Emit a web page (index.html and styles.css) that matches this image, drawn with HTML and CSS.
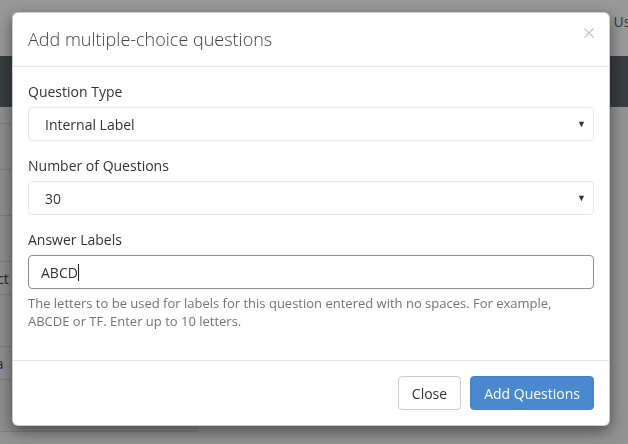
FILE: index.html
```html
<!DOCTYPE html>
<html lang="en">
<head>
  <meta charset="UTF-8">
  <meta name="viewport" content="width=device-width, initial-scale=1.0">
  <title>Add multiple-choice questions</title>
  <link rel="stylesheet" href="styles.css">
</head>
<body>
<div class="page">
  <!-- Page behind the dialog -->
  <header class="topbar">
    <a class="user-link" href="#">User</a>
  </header>
  <div class="toolbar"></div>
  <div class="content">
    <ul class="sidebar">
      <li class="row row-head"></li>
      <li class="row"></li>
      <li class="row"></li>
      <li class="row"></li>
      <li class="row row-sm">Select</li>
      <li class="row row-lg"></li>
      <li class="row row-sm">Extra</li>
      <li class="row row-lg"></li>
    </ul>
  </div>
</div>

<div class="backdrop"></div>

<div class="modal">
  <div class="modal-header">
    <h4 class="modal-title">Add multiple-choice questions</h4>
    <button class="close" type="button" aria-label="Close">
      <svg width="10" height="10" viewBox="0 0 10 10">
        <path d="M0.5 0.5 L9.5 9.5 M9.5 0.5 L0.5 9.5" stroke="#c4c4c4" stroke-width="1.1" fill="none"/>
      </svg>
    </button>
  </div>

  <div class="modal-body">
    <div class="field">
      <label for="qtype">Question Type</label>
      <div class="select-wrap">
        <select id="qtype">
          <option>Internal Label</option>
        </select>
      </div>
    </div>

    <div class="field">
      <label for="qcount">Number of Questions</label>
      <div class="select-wrap">
        <select id="qcount">
          <option>30</option>
        </select>
      </div>
    </div>

    <div class="field">
      <label for="labels">Answer Labels</label>
      <div class="input-wrap">
        <input type="text" id="labels" value="ABCD" autofocus>
        <span class="caret"></span>
      </div>
      <p class="help">The letters to be used for labels for this question entered with no spaces. For example, ABCDE or TF. Enter up to 10 letters.</p>
    </div>
  </div>

  <div class="modal-footer">
    <button class="btn btn-default" type="button">Close</button>
    <button class="btn btn-primary" type="button">Add Questions</button>
  </div>
</div>
</body>
</html>
```

FILE: styles.css
```css
/* General reset */
* {
  margin: 0;
  padding: 0;
  box-sizing: border-box;
}

body {
  font-family: 'Open Sans', 'Liberation Sans', sans-serif;
  font-size: 14px;
  color: #333;
  height: 100vh;
  overflow: hidden;
}

/* Page behind the dialog */
.page {
  width: 700px;
  margin-left: -40px;
  height: 100vh;
  background: #f6f6f6;
}

.topbar {
  height: 56px;
  background: #fff;
  display: flex;
  justify-content: flex-end;
  padding: 12px 16px 0 0;
}

.user-link {
  color: #5a5f66;
  text-decoration: none;
  line-height: 20px;
}

.toolbar {
  height: 51px;
  background: #62676d;
}

.content {
  display: flex;
}

.sidebar {
  list-style: none;
  width: 237px;
  border-right: 1px solid #e2e2e2;
  background: #eee;
}

.row {
  height: 46px;
  border-bottom: 1px solid #d6d6d6;
  padding-left: 10px;
  display: flex;
  align-items: center;
  color: #444;
}

.row-head {
  height: 17px;
}

.row-sm {
  height: 33px;
}

.row-lg {
  height: 52px;
}

.backdrop {
  position: fixed;
  inset: 0;
  background: rgba(0, 0, 0, 0.4);
}

/* Dialog */
.modal {
  position: absolute;
  top: 12px;
  left: 12px;
  width: 598px;
  background: #fff;
  border: 1px solid rgba(0, 0, 0, 0.2);
  border-radius: 6px;
  box-shadow: 0 5px 15px rgba(0, 0, 0, 0.5);
}

.modal-header {
  display: flex;
  justify-content: space-between;
  align-items: flex-start;
  padding: 15px;
  border-bottom: 1px solid #e5e5e5;
}

.modal-title {
  font-size: 18px;
  font-weight: 300;
  line-height: 23px;
  color: #444;
}

.close {
  background: none;
  border: none;
  width: 10px;
  height: 10px;
  display: flex;
  cursor: pointer;
}

.modal-body {
  padding: 15px;
}

.field {
  margin-bottom: 15px;
}

label {
  display: block;
  line-height: 20px;
  margin-bottom: 5px;
}

.select-wrap,
.input-wrap {
  position: relative;
}

.select-wrap::after {
  content: "\25BC";
  position: absolute;
  right: 8px;
  top: 12px;
  font-size: 9px;
  line-height: 10px;
  color: #333;
  pointer-events: none;
}

select {
  width: 100%;
  height: 34px;
  padding: 0 16px;
  border: 1px solid #e8e8e8;
  border-radius: 4px;
  background: #fff;
  font-family: inherit;
  font-size: 14px;
  color: #333;
  appearance: none;
  -webkit-appearance: none;
}

input {
  width: 100%;
  height: 34px;
  padding: 0 12px;
  border: 1px solid #8f8f8f;
  border-radius: 4px;
  font-family: inherit;
  font-size: 14px;
  color: #333;
  caret-color: transparent;
}

input:focus {
  outline: none;
}

/* text cursor after the typed letters */
.caret {
  position: absolute;
  left: 50px;
  top: 9px;
  width: 1px;
  height: 17px;
  background: #222;
}

.help {
  margin-top: 5px;
  font-size: 13px;
  line-height: 18px;
  color: #737373;
}

.modal-footer {
  display: flex;
  justify-content: flex-end;
  gap: 9px;
  padding: 15px;
  border-top: 1px solid #e5e5e5;
}

.btn {
  height: 34px;
  padding: 0 13px;
  border-radius: 4px;
  font-family: inherit;
  font-size: 14px;
  cursor: pointer;
}

.btn-default {
  background: #fff;
  border: 1px solid #ccc;
  color: #333;
}

.btn-primary {
  background: #4a89cd;
  border: 1px solid #4683c6;
  color: #fff;
}
```
